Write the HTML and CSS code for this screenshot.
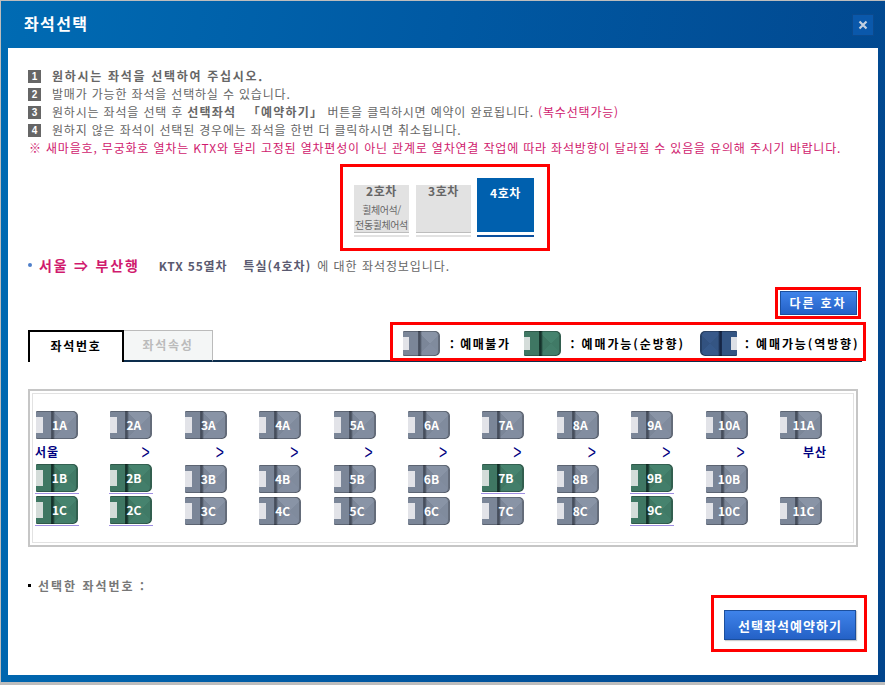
FILE: index.html
```html
<!DOCTYPE html>
<html lang="ko">
<head>
<meta charset="utf-8">
<title>좌석선택</title>
<link rel="stylesheet" href="styles.css">
</head>
<body>
<div class="modal">
  <header class="head">
    <h1 class="title">좌석선택</h1>
    <button class="close" type="button" aria-label="닫기">
      <svg width="10" height="10" viewBox="0 0 10 10"><path d="M1.5 1.5 8.5 8.5M8.5 1.5 1.5 8.5" stroke="#c3d0e0" stroke-width="2.2" fill="none"/></svg>
    </button>
  </header>
  <main class="body">
    <ol class="notice">
      <li class="notice-line notice-strong"><span class="num">1</span>원하시는 좌석을 선택하여 주십시오.</li>
      <li class="notice-line"><span class="num">2</span>발매가 가능한 좌석을 선택하실 수 있습니다.</li>
      <li class="notice-line"><span class="num">3</span>원하시는 좌석을 선택 후&nbsp;<b class="em">선택좌석 「예약하기」</b>&nbsp;버튼을 클릭하시면 예약이 완료됩니다.&nbsp;<span class="pink">(복수선택가능)</span></li>
      <li class="notice-line"><span class="num">4</span>원하지 않은 좌석이 선택된 경우에는 좌석을 한번 더 클릭하시면 취소됩니다.</li>
      <li class="notice-line notice-warn">※ 새마을호, 무궁화호 열차는 KTX와 달리 고정된 열차편성이 아닌 관계로 열차연결 작업에 따라 좌석방향이 달라질 수 있음을 유의해 주시기 바랍니다.</li>
    </ol>

    <div class="cars red">
      <div class="car"><div class="car-face"><strong>2호차</strong><span class="car-sub">휠체어석/<br>전동휠체어석</span></div><i class="car-bar"></i></div>
      <div class="car"><div class="car-face"><strong>3호차</strong></div><i class="car-bar"></i></div>
      <div class="car car-on"><div class="car-face"><strong>4호차</strong></div><i class="car-bar"></i></div>
    </div>

    <div class="route">
      <i class="dot"></i><span class="route-name">서울 ⇒ 부산행</span>
      <b class="route-train">KTX 55열차</b><b class="route-class">특실(4호차)</b><span class="route-tail">에 대한 좌석정보입니다.</span>
    </div>

    <div class="other-row">
      <div class="other red"><button class="btn btn-other" type="button">다른 호차</button></div>
    </div>

    <div class="tabbar">
      <div class="tabs">
        <div class="tab tab-on">좌석번호</div>
        <div class="tab tab-off">좌석속성</div>
        <div class="tab-line"></div>
      </div>
      <div class="legend red">
        <span class="seat seat-mini seat-gray"></span><span class="legend-text legend-a">: 예매불가</span>
        <span class="seat seat-mini seat-green"></span><span class="legend-text legend-b">: 예매가능(순방향)</span>
        <span class="seat seat-mini seat-blue"></span><span class="legend-text legend-c">: 예매가능(역방향)</span>
      </div>
    </div>

    <section class="map">
      <div class="map-inner">
        <div class="seats">
          <div class="seat seat-gray">1A</div><div class="seat seat-gray">2A</div><div class="seat seat-gray">3A</div><div class="seat seat-gray">4A</div><div class="seat seat-gray">5A</div><div class="seat seat-gray">6A</div><div class="seat seat-gray">7A</div><div class="seat seat-gray">8A</div><div class="seat seat-gray">9A</div><div class="seat seat-gray">10A</div><div class="seat seat-gray">11A</div>

          <div class="place place-from">서울</div><div class="arrow">&gt;</div><div class="arrow">&gt;</div><div class="arrow">&gt;</div><div class="arrow">&gt;</div><div class="arrow">&gt;</div><div class="arrow">&gt;</div><div class="arrow">&gt;</div><div class="arrow">&gt;</div><div class="arrow">&gt;</div><div class="place place-to">부산</div>

          <a class="seat seat-green seat-link">1B</a><a class="seat seat-green seat-link">2B</a><div class="seat seat-gray">3B</div><div class="seat seat-gray">4B</div><div class="seat seat-gray">5B</div><div class="seat seat-gray">6B</div><a class="seat seat-green seat-link">7B</a><div class="seat seat-gray">8B</div><a class="seat seat-green seat-link">9B</a><div class="seat seat-gray">10B</div><div class="empty"></div>

          <a class="seat seat-green seat-link">1C</a><a class="seat seat-green seat-link">2C</a><div class="seat seat-gray">3C</div><div class="seat seat-gray">4C</div><div class="seat seat-gray">5C</div><div class="seat seat-gray">6C</div><div class="seat seat-gray">7C</div><div class="seat seat-gray">8C</div><a class="seat seat-green seat-link">9C</a><div class="seat seat-gray">10C</div><div class="seat seat-gray">11C</div>
        </div>
      </div>
    </section>

    <div class="picked"><i class="square"></i>선택한 좌석번호 :</div>

    <div class="reserve-row">
      <div class="reserve red"><button class="btn btn-reserve" type="button">선택좌석예약하기</button></div>
    </div>
  </main>
</div>
</body>
</html>
```

FILE: styles.css
```css
* { box-sizing: border-box; }
html, body { margin: 0; padding: 0; }
body {
  width: 885px;
  height: 685px;
  overflow: hidden;
  background: #bdbdbd;
  font-family: "Noto Sans CJK KR", "Liberation Sans", sans-serif;
  font-size: 12px;
  color: #666;
}

.modal {
  width: 884px;
  height: 681px;
  margin: 1px 0 0 1px;
  padding: 0 7px 7px 7px;
  background: linear-gradient(100deg, #006bb3 0%, #0059a3 45%, #02458c 100%);
}
.head {
  height: 47px;
  display: flex;
  align-items: center;
  justify-content: space-between;
  padding: 0 4px 0 16px;
}
.title { margin: 0; font-size: 16px; font-weight: 700; color: #fff; line-height: 20px; letter-spacing: 1.4px; position: relative; top: -2px; }
.close {
  width: 22px; height: 22px; padding: 0;
  margin-top: 1px;
  display: flex; align-items: center; justify-content: center;
  background: #0a58ab; border: 1px solid #0b4a8e;
}

.body {
  width: 870px;
  height: 627px;
  background: #fff;
  padding: 19px 0 0 20px;
}

/* notice */
.notice { list-style: none; margin: 0; padding: 0; }
.notice-line { height: 18px; line-height: 18px; display: flex; align-items: center; white-space: nowrap; letter-spacing: 0.82px; }
.num {
  width: 13px; height: 13px; margin-right: 11px; flex: none;
  background: #666; color: #fff;
  font: 700 10px/13px "Liberation Sans", sans-serif;
  text-align: center; letter-spacing: 0;
}
.notice-strong { font-weight: 700; letter-spacing: 1.7px; }
.em { font-weight: 700; letter-spacing: 1.2px; word-spacing: 7px; }
.pink { color: #d01a6e; }
.notice-warn { color: #d01a6e; padding-left: 1px; }

.red { border: 3px solid #f00; background: #fff; }

/* cars */
.cars {
  width: 210px; height: 87px;
  margin: 7px 0 0 312px;
  padding: 0 13px 11px 11px;
  display: flex; align-items: flex-end; gap: 7px;
}
.car { width: 55px; display: flex; flex-direction: column; text-align: center; }
.car-on { width: 57px; margin-left: -1px; height: 59px; }
.car-face { height: 48px; background: #e2e2e2; border-bottom: 1px solid #bdbdbd; display: flex; flex-direction: column; align-items: center; color: #666; }
.car-face strong { font-size: 12px; line-height: 16px; margin-top: -2px; letter-spacing: 0.6px; }
.car-sub { font-size: 10px; line-height: 15px; margin-top: 3px; letter-spacing: -0.4px; white-space: nowrap; }
.car-bar { display: block; height: 2px; margin-top: 2px; background: #e2e2e2; }
.car-on .car-face { height: 54px; background: #0060ae; border-bottom: 0; color: #fff; padding-top: 9px; }
.car-on .car-bar { height: 2px; margin-top: 3px; background: #0b4f9e; }

/* route */
.route { height: 18px; margin-top: 5px; display: flex; align-items: center; white-space: nowrap; }
.dot { width: 4px; height: 4px; background: #4f7fc9; border-radius: 50%; margin-right: 7px; flex: none; }
.route-name { font-size: 14px; font-weight: 700; color: #d01a6e; letter-spacing: 1.8px; }
.route-train { margin-left: 19px; font-weight: 700; color: #5a5a70; letter-spacing: 0.8px; }
.route-class { margin-left: 16px; font-weight: 700; color: #5a5a70; letter-spacing: 1.1px; }
.route-tail { margin-left: 6px; letter-spacing: 0.95px; }

/* other car */
.other-row { margin-top: 13px; width: 833px; display: flex; justify-content: flex-end; }
.other { width: 86px; height: 32px; padding: 1px; display: flex; align-items: center; justify-content: center; }
.btn {
  color: #fff; font: 700 12px/1 "Noto Sans CJK KR", sans-serif;
  background: linear-gradient(180deg, #3f83ea, #2461c6);
  border: 1px solid #1c4f9d;
  padding: 0;
}
.btn-other { width: 77px; height: 24px; letter-spacing: 1.9px; }

/* tabs + legend, stacked in one grid cell */
.tabbar { margin-top: 3px; width: 834px; height: 40px; display: grid; }
.tabs, .legend { grid-area: 1 / 1; }
.tabs { display: flex; align-items: flex-end; align-self: end; }
.tab { text-align: center; font-weight: 700; letter-spacing: 1.7px; }
.tab-on { width: 96px; height: 32px; line-height: 28px; border: 2px solid #000; border-bottom: 0; color: #000; background: #fff; }
.tab-off { width: 89px; height: 32px; line-height: 28px; border: 1px solid #bbb; border-left: 0; border-bottom: 2px solid #0c2d4c; background: #f4f6f6; color: #bbb; }
.tab-line { flex: 1; height: 2px; background: #0c2d4c; }
.legend {
  justify-self: end; align-self: start;
  width: 476px; height: 39px;
  margin-right: -4px;
  padding: 4px 0 0 10px;
  display: flex; align-items: center;
}
.legend-text { font-weight: 700; color: #000; white-space: nowrap; letter-spacing: 1.9px; }
.legend-a { margin-left: 10px; margin-right: 14px; letter-spacing: 1.5px; }
.legend-b { margin-left: 9px; margin-right: 15px; }
.legend-c { margin-left: 8px; }

/* seat map */
.map { margin-top: 27px; width: 830px; height: 158px; border: 2px solid #c6c6c6; padding: 2px; }
.map-inner { height: 100%; border: 1px solid #e2e2e2; padding: 17px 0 0 3px; }
.seats {
  display: grid;
  grid-template-columns: repeat(11, 74.4px);
  grid-template-rows: 28px 26px 32px 28px;
}
.seat {
  display: flex; align-items: center; justify-content: center;
  width: 42px; height: 28px; padding: 0 0 1px 5px;
  position: relative;
  color: #fff; font-weight: 700; font-size: 12px;
  border-radius: 1px 5px 5px 1px;
  box-shadow: inset -2px 0 0 rgba(0,0,0,.22), inset 0 1px 0 rgba(0,0,0,.25), inset 0 -1px 0 rgba(0,0,0,.25);
}
.seat::before {
  content: ""; position: absolute; left: 0; top: 6px; width: 7px; height: 16px;
  background: #e2e3e8;
}
.seat-gray {
  background:
    linear-gradient(90deg, transparent 15px, #4f5766 15px, #444c5a 17px, transparent 19px),
    conic-gradient(from 45deg at 72% 50%, #808b9d 0 25%, #828da0 25% 50%, #7b8698 50% 75%, #8994a6 75%);
}
.seat-green {
  background:
    linear-gradient(90deg, transparent 15px, #1a3a30 15px, #14302a 17px, transparent 19px),
    conic-gradient(from 45deg at 72% 50%, #407a66 0 25%, #437e6a 25% 50%, #3f7763 50% 75%, #46836e 75%);
}
.seat-green::before { background: #d4dcd9; }
.seat-blue {
  background:
    linear-gradient(270deg, transparent 15px, #1a2c4e 15px, #142442 17px, transparent 19px),
    conic-gradient(from 45deg at 28% 50%, #345583 0 25%, #36598a 25% 50%, #325280 50% 75%, #38598a 75%);
  border-radius: 5px 1px 1px 5px;
  box-shadow: inset 2px 0 0 rgba(0,0,0,.22), inset 0 1px 0 rgba(0,0,0,.25), inset 0 -1px 0 rgba(0,0,0,.25);
}
.seat-blue::before { left: auto; right: 0; background: #dde0e6; }
.seat-mini { width: 37px; height: 25px; padding: 0; flex: none; }
.seat-mini::before { top: 6px; width: 6px; height: 13px; }
.seat-link { margin-top: -1px; }
.seat-link::after {
  content: ""; position: absolute; left: -1px; right: -1px; bottom: -2px; height: 1px;
  background: #a08fe2;
}
.place { color: #000080; font-weight: 700; line-height: 26px; height: 24px; letter-spacing: 1px; }
.place-from { margin-left: -1px; }
.place-to { margin-left: 23px; }
.arrow {
  color: #000080; font: 14px/24px "Liberation Sans", sans-serif;
  padding-left: 31px; height: 24px;
  transform: scaleY(1.5);
}

/* selected */
.picked { margin-top: 29px; height: 18px; display: flex; align-items: center; font-weight: 700; color: #777; letter-spacing: 2px; }
.square { width: 3px; height: 3px; background: #000; margin-right: 7px; flex: none; }

.reserve-row { margin-top: 1px; width: 839px; display: flex; justify-content: flex-end; }
.reserve { width: 156px; height: 57px; padding: 12px 8px 0 10px; }
.btn-reserve { width: 132px; height: 30px; font-size: 13px; letter-spacing: 1.05px; box-shadow: 1px 1px 1px #ccc; }
```
